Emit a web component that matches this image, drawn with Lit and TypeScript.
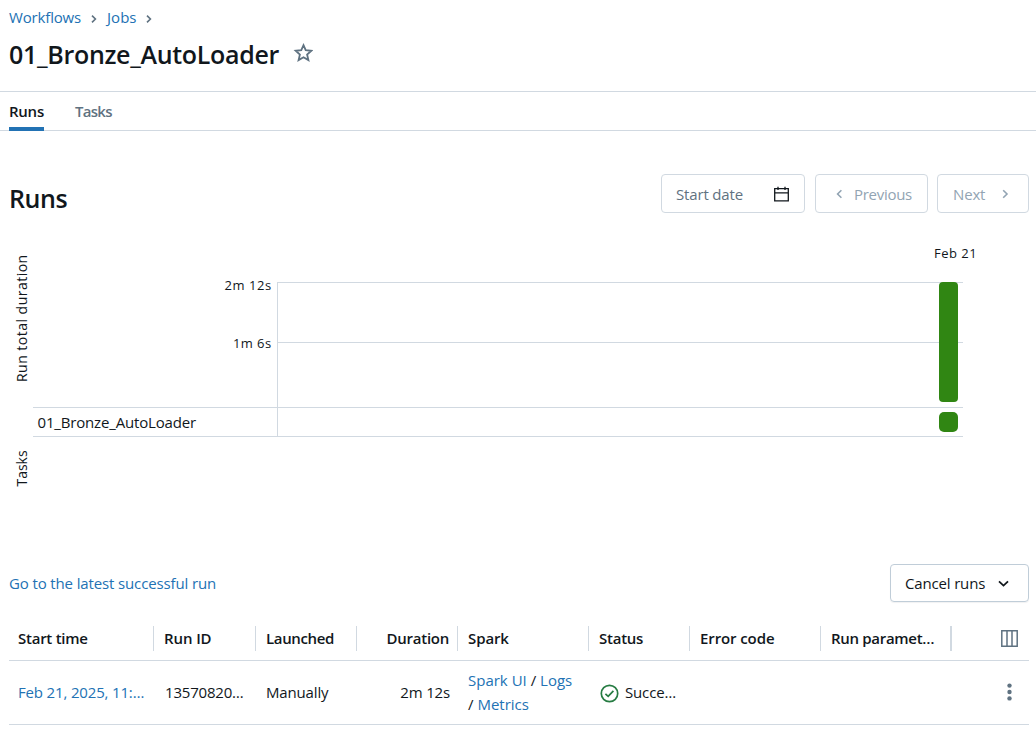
import { LitElement, html, css, svg } from "lit";
import { customElement } from "lit/decorators.js";

const chevron = (d: string) => html`
  <svg width="10" height="10" viewBox="0 0 10 10" fill="none" stroke="currentColor" stroke-width="1.6">
    <path d=${d}></path>
  </svg>`;

const RIGHT = "M3.2 1.2 7 5 3.2 8.8";
const CRUMB = "M3 1.6 6.4 5 3 8.4";
const LEFT = "M7.4 1.2 3.6 5 7.4 8.8";
const DOWN = "M1 3.4 5.5 7.6 10 3.4";

@customElement("run-chart")
class RunChart extends LitElement {
  static styles = css`
    :host { display: block; }
    svg { display: block; }
    .line { stroke: #d1d9e1; stroke-width: 1; shape-rendering: crispEdges; }
    .bar { fill: #308613; }
    text { font-family: "Open Sans", "Noto Sans", sans-serif; fill: #11171c; }
    .tick { font-size: 13px; }
    .axis { font-size: 14px; }
    .task { font-size: 15px; }
  `;
  render() {
    const h = (x: number, y: number) =>
      svg`<line class="line" x1=${x} x2="963" y1=${y + 0.5} y2=${y + 0.5}></line>`;
    return html`
      <svg width="1036" height="270" viewBox="0 0 1036 270">
        ${h(277, 52)}${h(277, 112)}${h(33, 177)}${h(33, 206)}
        <line class="line" x1="277.5" x2="277.5" y1="52" y2="206"></line>
        <rect class="bar" x="939" y="52" width="19" height="120" rx="4"></rect>
        <rect class="bar" x="939" y="182" width="19" height="20" rx="5"></rect>
        <text class="tick" x="934" y="28" textLength="42.5">Feb 21</text>
        <text class="tick" x="224.5" y="60" textLength="46.5">2m 12s</text>
        <text class="tick" x="233" y="118" textLength="38">1m 6s</text>
        <text class="task" x="37.5" y="198" textLength="158.5">01_Bronze_AutoLoader</text>
        <text class="axis" transform="translate(27 152) rotate(-90)" textLength="127">Run total duration</text>
        <text class="axis" transform="translate(27 256.5) rotate(-90)" textLength="36">Tasks</text>
      </svg>`;
  }
}

@customElement("app-root")
class AppRoot extends LitElement {
  static styles = css`
    :host {
      display: block; height: 729px; overflow: hidden; background: #fff; color: #11171c;
      font: 15px/24px "Open Sans", "Noto Sans", sans-serif; letter-spacing: -0.16px;
    }
    * { box-sizing: border-box; }
    svg { display: block; flex: none; }
    a { color: #2272b4; text-decoration: none; }
    .crumbs { display: flex; align-items: center; height: 34px; padding-left: 9px; }
    .crumbs svg { color: #5f7281; margin: 3px 8px 0; }
    .crumbs .jobs { letter-spacing: 0; }
    .title { display: flex; align-items: center; height: 57px; padding: 0 0 18px 9px; }
    h1, h2 { margin: 0; font-size: 25px; line-height: 36px; font-weight: 600; letter-spacing: -0.31px; }
    .title svg { margin: -1px 0 0 14px; color: #5f7281; }
    .tabs {
      display: flex; gap: 31px; height: 40px; padding-left: 9px;
      border-top: 1px solid #d1d9e1; border-bottom: 1px solid #d1d9e1;
      font-weight: 600; line-height: 38px; letter-spacing: -0.25px;
    }
    .tab { height: 39px; color: #5f7281; }
    .tab.tasks { letter-spacing: -0.7px; }
    .tab.on { color: #11171c; border-bottom: 4px solid #2272b4; }
    .bar { display: flex; align-items: center; height: 39px; margin-top: 43px; padding: 0 7px 0 9px; }
    .bar h2 { flex: 1; padding-top: 9px; letter-spacing: -0.4px; }
    .btn {
      display: flex; align-items: center; height: 39px; border: 1px solid #d1d9e1; border-radius: 4px;
      color: #92a4b3;
    }
    .btn span { padding-top: 1px; }
    .date { width: 144px; color: #5f7281; padding: 0 14px; justify-content: space-between; margin-right: 10px; }
    .date svg { color: #11171c; margin-top: 1px; }
    .prev { width: 113px; padding-left: 18px; gap: 10px; margin-right: 9px; letter-spacing: -0.28px; }
    .next { width: 92px; padding-left: 15px; gap: 15px; }
    run-chart { margin-top: 17px; }
    .actions { display: flex; align-items: center; justify-content: space-between; height: 39px; margin-top: 64px; padding: 0 7px 0 9px; }
    .actions a { letter-spacing: -0.13px; padding-bottom: 2px; }
    .cancel {
      width: 139px; height: 38px; margin-bottom: 1px; color: #11171c; border-color: #c0cdd8; padding-left: 14px; gap: 13px;
      box-shadow: 0 1px 1px rgba(17, 23, 28, 0.06);
    }
    .cancel span { padding: 0; }
    .table { margin: 14px 7px 0 9px; }
    .row { display: grid; grid-template-columns: 145px 102px 101px 101px 131px 101px 131px 131px 1fr; align-items: center; border-bottom: 1px solid #d1d9e1; }
    .row > div { padding-left: 10px; white-space: nowrap; }
    .row > div:first-child { padding-left: 9px; }
    .head { height: 44px; font-weight: 600; letter-spacing: -0.25px; }
    .head > div { height: 25px; border-right: 1px solid #d1d9e1; }
    .head > .params { border-right-width: 2px; letter-spacing: -0.3px; }
    .head > .tight { letter-spacing: -0.36px; }
    .head > .loose { letter-spacing: -0.1px; }
    .row > .num { text-align: right; padding: 0 8px 0 0; }
    .row > .last { border: 0; display: flex; justify-content: flex-end; align-items: center; padding: 0 11px 0 0; color: #5f7281; }
    .body { height: 64px; padding-bottom: 1px; }
    .body > .id { letter-spacing: -0.2px; padding-left: 11px; }
    .body > .spark { letter-spacing: 0; }
    .row > .status { display: flex; align-items: center; gap: 6px; padding-left: 11px; }
    .status svg { margin-top: 2px; }
    .row > .kebab { padding-right: 17px; }
  `;
  render() {
    return html`
      <nav class="crumbs">
        <a>Workflows</a>${chevron(CRUMB)}<a class="jobs">Jobs</a>${chevron(CRUMB)}
      </nav>
      <header class="title">
        <h1>01_Bronze_AutoLoader</h1>
        <svg width="20" height="20" viewBox="0 0 20 20" fill="none" stroke="currentColor" stroke-width="1.8">
          <path d="M10.5 2.2 12.7 7.2 18.3 7.8 14.1 11.5 15.4 17.1 10.5 14.2 5.6 17.1 6.9 11.5 2.7 7.8 8.3 7.2Z"></path>
        </svg>
      </header>
      <div class="tabs"><div class="tab on">Runs</div><div class="tab tasks">Tasks</div></div>
      <section class="bar">
        <h2>Runs</h2>
        <div class="btn date"><span>Start date</span>
          <svg width="17" height="17" viewBox="0 0 17 17" fill="none" stroke="currentColor" stroke-width="1.3">
            <path d="M1.7 2.7H15.3V14.8H1.7ZM1.7 6.8H15.3M5 .8V4M12 .8V4"></path>
          </svg>
        </div>
        <div class="btn prev">${chevron(LEFT)}<span>Previous</span></div>
        <div class="btn next"><span>Next</span>${chevron(RIGHT)}</div>
      </section>
      <run-chart></run-chart>
      <section class="actions">
        <a>Go to the latest successful run</a>
        <div class="btn cancel"><span>Cancel runs</span>
          <svg width="11" height="10" viewBox="0 0 11 10" fill="none" stroke="currentColor" stroke-width="1.8"><path d=${DOWN}></path></svg>
        </div>
      </section>
      <section class="table">
        <div class="row head">
          <div>Start time</div>
          <div class="loose">Run ID</div>
          <div class="tight">Launched</div>
          <div class="num">Duration</div>
          <div class="loose">Spark</div>
          <div>Status</div>
          <div class="loose">Error code</div>
          <div class="params">Run paramet…</div>
          <div class="last">
            <svg width="17" height="17" viewBox="0 0 17 17" fill="none" stroke="currentColor" stroke-width="1.5">
              <path d="M.8 .8H16.2V16.2H.8ZM6 .8V16.2M11 .8V16.2"></path>
            </svg>
          </div>
        </div>
        <div class="row body">
          <div><a>Feb 21, 2025, 11:…</a></div>
          <div class="id">13570820…</div>
          <div>Manually</div>
          <div class="num">2m 12s</div>
          <div class="spark"><a>Spark UI</a> / <a>Logs</a><br />/ <a>Metrics</a></div>
          <div class="status">
            <svg width="19" height="19" viewBox="0 0 19 19" fill="none" stroke="#277c43" stroke-width="1.7">
              <circle cx="9.5" cy="9.5" r="8.2"></circle><path d="M5.4 9.8 8.2 12.4 13.4 6.9"></path>
            </svg>
            <span>Succe…</span>
          </div>
          <div></div>
          <div></div>
          <div class="last kebab">
            <svg width="5" height="18" viewBox="0 0 5 18" fill="currentColor">
              <circle cx="2.5" cy="2.6" r="2.2"></circle><circle cx="2.5" cy="9" r="2.2"></circle><circle cx="2.5" cy="15.4" r="2.2"></circle>
            </svg>
          </div>
        </div>
      </section>`;
  }
}
